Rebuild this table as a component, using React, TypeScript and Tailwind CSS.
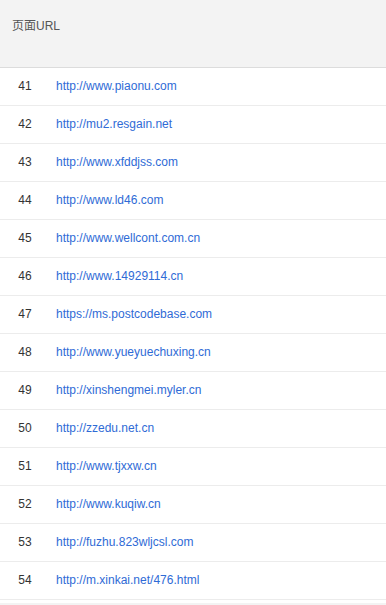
const rows: [number, string][] = [
  [41, "http://www.piaonu.com"],
  [42, "http://mu2.resgain.net"],
  [43, "http://www.xfddjss.com"],
  [44, "http://www.ld46.com"],
  [45, "http://www.wellcont.com.cn"],
  [46, "http://www.14929114.cn"],
  [47, "https://ms.postcodebase.com"],
  [48, "http://www.yueyuechuxing.cn"],
  [49, "http://xinshengmei.myler.cn"],
  [50, "http://zzedu.net.cn"],
  [51, "http://www.tjxxw.cn"],
  [52, "http://www.kuqiw.cn"],
  [53, "http://fuzhu.823wljcsl.com"],
  [54, "http://m.xinkai.net/476.html"],
];

export default function App() {
  return (
    <div
      className="w-[386px] h-[605px] overflow-hidden bg-[#f3f3f3] text-[12px]"
      style={{ fontFamily: '"Liberation Sans", Arial, "Noto Sans CJK SC", sans-serif' }}
    >
      <div className="h-[68px] bg-[#f3f3f3] border-b border-[#dcdcdc] pl-[12px] pt-[18px] text-[#555] leading-[16px]">
        页面URL
      </div>
      <div className="bg-white">
        {rows.map(([n, url]) => (
          <div key={n} className="h-[38px] flex items-center pb-[2px] border-b border-[#ececec]">
            <div className="w-[50px] text-center text-[#333]">{n}</div>
            <a className="pl-[6px] text-[#2f6bd6]" href="#">
              {url}
            </a>
          </div>
        ))}
        <div className="h-[3px] bg-white" />
      </div>
    </div>
  );
}
